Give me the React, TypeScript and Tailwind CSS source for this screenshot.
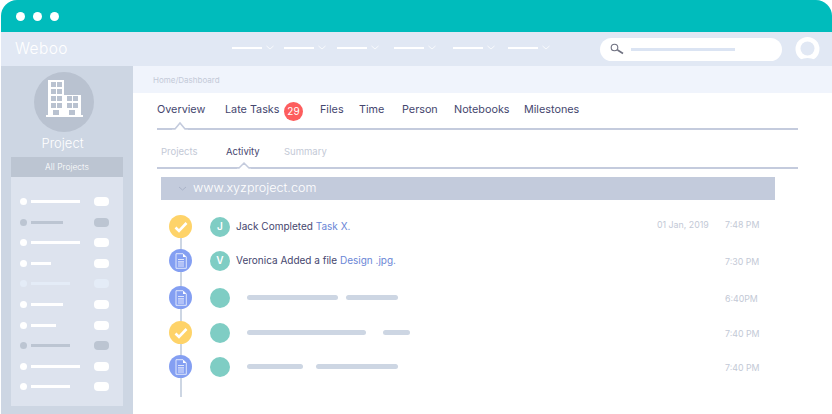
import React from "react";

const font = "[font-family:'Inter',sans-serif]";

// width of each top nav slot, the gaps in the top bar are not even
const navItems = ["w-[52px]", "w-[53px]", "w-[57px]", "w-[59px]", "w-[55px]", "w-[50px]"];

const sideRows = [
  { w: "w-[49px]", tone: "white" },
  { w: "w-[32px]", tone: "dark" },
  { w: "w-[49px]", tone: "white" },
  { w: "w-[20px]", tone: "white" },
  { w: "w-[39px]", tone: "pale" },
  { w: "w-[32px]", tone: "white" },
  { w: "w-[25px]", tone: "white" },
  { w: "w-[39px]", tone: "dark" },
  { w: "w-[49px]", tone: "white" },
  { w: "w-[39px]", tone: "white" },
];

function toneClass(tone: string) {
  if (tone === "dark") return "bg-[#bcc5d2]";
  if (tone === "pale") return "bg-[#e4ecf7]";
  return "bg-white";
}

function CheckBadge() {
  return (
    <div className="w-[23px] h-[23px] rounded-full bg-[#fed369] flex items-center justify-center shrink-0">
      <svg width="14" height="12" viewBox="0 0 14 12" fill="none">
        <path d="M1.5 6.5 L5 10 L12.5 2" stroke="#fff" strokeWidth="2.6" />
      </svg>
    </div>
  );
}

function FileBadge() {
  return (
    <div className="w-[23px] h-[23px] rounded-full bg-[#849ff2] flex items-center justify-center shrink-0">
      <svg width="12" height="16" viewBox="0 0 12 16" fill="none">
        <path d="M1 .7 H8 L11.3 4 V15.3 H1 Z" stroke="#dfe6fb" strokeWidth="1" />
        <path d="M8 .7 L11.3 4 H8 Z" fill="#fff" />
        <path d="M3 6.5 H9 M3 8.8 H9 M3 11 H9 M3 13 H9" stroke="#dfe6fb" strokeWidth="1.2" />
      </svg>
    </div>
  );
}

function Bar({ w, className = "" }: { w: string; className?: string }) {
  return <div className={`h-[5px] rounded-sm bg-[#cdd6e3] ${w} ${className}`} />;
}

function Avatar({ letter }: { letter?: string }) {
  return (
    <div className="w-5 h-5 rounded-full bg-[#7fcdc4] flex items-center justify-center text-white text-[10px] font-semibold shrink-0">
      {letter}
    </div>
  );
}

function Stamp({ children, className = "w-[34px]" }: { children: React.ReactNode; className?: string }) {
  return <span className={`${className} whitespace-nowrap text-[#c3c9d6] text-[8.8px]`}>{children}</span>;
}

export default function App() {
  return (
    <div className={`w-[832px] h-[414px] bg-white overflow-hidden flex flex-col pl-px ${font}`}>
      {/* window title bar */}
      <div className="h-8 shrink-0 bg-[#00bcbc] rounded-t-2xl flex items-center gap-2 pl-[15px]">
        <div className="w-[9px] h-[9px] rounded-full bg-white" />
        <div className="w-[9px] h-[9px] rounded-full bg-white" />
        <div className="w-[9px] h-[9px] rounded-full bg-white" />
      </div>

      {/* top nav */}
      <div className="h-[34px] shrink-0 bg-[#e1e8f4] flex items-center pl-[14px]">
        <div className="text-[15.5px] font-light text-white w-[217px] leading-none tracking-wide">Weboo</div>
        <div className="flex w-[368px] -mt-[3px]">
          {navItems.map((w, i) => (
            <div key={i} className={`flex items-center gap-1 ${w}`}>
              <div className="w-[30px] h-[2px] bg-white" />
              <svg width="8" height="5" viewBox="0 0 8 5" fill="none">
                <path d="M.5 1 L4 4 L7.5 1" stroke="#fff" strokeWidth="0.8" />
              </svg>
            </div>
          ))}
        </div>
        <div className="w-[182px] h-[23px] rounded-full bg-white flex items-center pl-[10px] gap-[7px]">
          <svg width="14" height="12" viewBox="0 0 14 12" fill="none">
            <circle cx="4.5" cy="4.5" r="3.3" stroke="#6f7180" strokeWidth="1.1" />
            <path d="M7.5 7 L13 10.5" stroke="#6f7180" strokeWidth="1.6" />
          </svg>
          <div className="w-[104px] h-[3px] bg-[#dbe4f3]" />
        </div>
        <svg className="ml-[13px]" width="25" height="25" viewBox="0 0 25 25">
          <circle cx="12.5" cy="12" r="12" fill="#fff" />
          <circle cx="12.5" cy="11.5" r="7" fill="#e1e8f4" />
          <ellipse cx="12.5" cy="26.5" rx="10" ry="5.5" fill="#e1e8f4" />
        </svg>
      </div>

      <div className="flex-1 flex min-h-0">
        {/* sidebar */}
        <div className="w-[132px] shrink-0 bg-[#cdd6e3] flex flex-col items-center pl-[10px] pr-[10px] pt-[6px]">
          <div className="w-[60px] h-[60px] mr-[6px] rounded-full bg-[#b9c2d0] flex items-center justify-center">
            <svg className="mb-[7px]" width="37" height="37" viewBox="0 0 37 37" fill="#fff">
              <path d="M2 0 H18 V15 H35 V35 H37 V37 H0 V35 H2 Z" />
              <g fill="#b9c2d0">
                <rect x="5" y="2" width="5" height="5" />
                <rect x="11" y="2" width="5" height="5" />
                <rect x="5" y="9" width="5" height="5" />
                <rect x="11" y="9" width="5" height="5" />
                <rect x="5" y="16" width="5" height="5" />
                <rect x="11" y="16" width="5" height="5" />
                <rect x="21" y="16" width="5" height="5" />
                <rect x="27" y="16" width="5" height="5" />
                <rect x="5" y="23" width="5" height="5" />
                <rect x="11" y="23" width="5" height="5" />
                <rect x="21" y="23" width="5" height="5" />
                <rect x="27" y="23" width="5" height="5" />
                <rect x="7" y="30" width="6" height="5" />
                <rect x="23" y="30" width="6" height="5" />
              </g>
            </svg>
          </div>
          <div className="text-[13px] font-light text-white leading-none mt-[5px] mb-[7px] mr-[9px]">Project</div>
          <div className="w-[112px] h-[249px] shrink-0 bg-[#dde3ee]">
            <div className="h-5 bg-[#bcc5d2] flex items-center justify-center text-white text-[8.5px] font-light">All Projects</div>
            <div className="flex flex-col gap-[13.6px] pt-[21px]">
              {sideRows.map((r, i) => (
                <div key={i} className="flex items-center h-[7px] pl-[9px] pr-[14px]">
                  <div className={`w-[7px] h-[7px] rounded-full ${toneClass(r.tone)}`} />
                  <div className={`ml-[4px] h-[3px] ${r.w} ${toneClass(r.tone)}`} />
                  <div className={`ml-auto w-[15px] h-[9px] rounded ${toneClass(r.tone)}`} />
                </div>
              ))}
            </div>
          </div>
        </div>

        {/* main */}
        <div className="flex-1 flex flex-col min-w-0">
          <div className="h-[27px] shrink-0 bg-[#f0f4fc] flex items-center pl-[20px] pt-[1px] text-[8px] text-[#c4cad8]">Home/Dashboard</div>

          {/* primary tabs */}
          <div className="relative ml-6 w-[641px] h-[38px] shrink-0 border-b-2 border-[#c4cbdd] flex items-center text-[10.8px] text-[#45466e] -mt-px whitespace-nowrap">
            <span className="w-[68px]">Overview</span>
            <span className="w-[59px]">Late Tasks</span>
            <span className="w-[19px] h-[19px] mt-[2px] mr-[17px] rounded-full bg-[#fd5d5d] text-white text-[10px] flex items-center justify-center">29</span>
            <span className="w-[39px]">Files</span>
            <span className="w-[43px]">Time</span>
            <span className="w-[52px]">Person</span>
            <span className="w-[70px]">Notebooks</span>
            <span>Milestones</span>
            <svg className="absolute left-[15px] -bottom-[2px]" width="16" height="9" viewBox="0 0 16 9" fill="none">
              <path d="M0 8 H3 L8 2 L13 8 H16 V9 H0 Z" fill="#fff" />
              <path d="M0 8 H3 L8 2 L13 8 H16" stroke="#c4cbdd" strokeWidth="1.6" />
            </svg>
          </div>

          {/* secondary tabs */}
          <div className="relative ml-[24px] mt-[1px] w-[641px] h-[38px] shrink-0 border-b-2 border-[#c4cbdd] flex items-center text-[9.5px] pl-[4px] pt-[6px] text-[#c3c9d6]">
            <span className="w-[65px]">Projects</span>
            <span className="w-[58px] text-[#45466e]">Activity</span>
            <span>Summary</span>
            <svg className="absolute left-[80px] -bottom-[2px]" width="14" height="8" viewBox="0 0 14 8" fill="none">
              <path d="M0 7 H2 L7 2 L12 7 H14 V8 H0 Z" fill="#fff" />
              <path d="M0 7 H2 L7 2 L12 7 H14" stroke="#c4cbdd" strokeWidth="1.5" />
            </svg>
          </div>

          {/* site header strip */}
          <div className="ml-[28px] mt-[8px] w-[614px] h-[23px] shrink-0 bg-[#c3cbdc] flex items-center pl-[17px] text-white text-[12.6px] font-light gap-[6px]">
            <svg width="9" height="5" viewBox="0 0 9 5" fill="none">
              <path d="M1 1 L4.5 4 L8 1" stroke="#aab3c8" strokeWidth="1" />
            </svg>
            www.xyzproject.com
          </div>

          {/* activity timeline */}
          <div className="relative ml-[36px] mt-[15px] w-[590px] text-[10px] text-[#45466e] whitespace-nowrap">
            <div className="absolute left-[11px] top-[10px] w-[2px] h-[172px] bg-[#cdd6e3]" />
            <div className="relative flex flex-col">
              <div className="h-[23px] flex items-center mb-[11px]">
                <CheckBadge />
                <div className="ml-[18px]"><Avatar letter="J" /></div>
                <span className="ml-[6px]">Jack Completed <span className="text-[#6a86d6]">Task X.</span></span>
                <Stamp className="ml-auto w-[68px] -mt-[4px]">01 Jan, 2019</Stamp>
                <Stamp className="w-[34px] -mt-[4px]">7:48 PM</Stamp>
              </div>
              <div className="h-[23px] flex items-center mb-[14px]">
                <FileBadge />
                <div className="ml-[18px]"><Avatar letter="V" /></div>
                <span className="ml-[6px]">Veronica Added a file <span className="text-[#6a86d6]">Design .jpg.</span></span>
                <Stamp className="ml-auto w-[34px] mt-[3px]">7:30 PM</Stamp>
              </div>
              <div className="h-[23px] flex items-center mb-[12px]">
                <FileBadge />
                <div className="ml-[18px]"><Avatar /></div>
                <Bar w="w-[91px]" className="ml-[17px]" />
                <Bar w="w-[52px]" className="ml-[8px]" />
                <Stamp className="ml-auto w-[34px] mt-[2px]">6:40PM</Stamp>
              </div>
              <div className="h-[23px] flex items-center mb-[11px]">
                <CheckBadge />
                <div className="ml-[18px]"><Avatar /></div>
                <Bar w="w-[119px]" className="ml-[17px]" />
                <Bar w="w-[27px]" className="ml-[17px]" />
                <Stamp className="ml-auto w-[34px] mt-[3px]">7:40 PM</Stamp>
              </div>
              <div className="h-[23px] flex items-center">
                <FileBadge />
                <div className="ml-[18px]"><Avatar /></div>
                <Bar w="w-[56px]" className="ml-[17px]" />
                <Bar w="w-[82px]" className="ml-[13px]" />
                <Stamp className="ml-auto w-[34px] mt-[2px]">7:40 PM</Stamp>
              </div>
            </div>
          </div>
        </div>
      </div>
    </div>
  );
}
